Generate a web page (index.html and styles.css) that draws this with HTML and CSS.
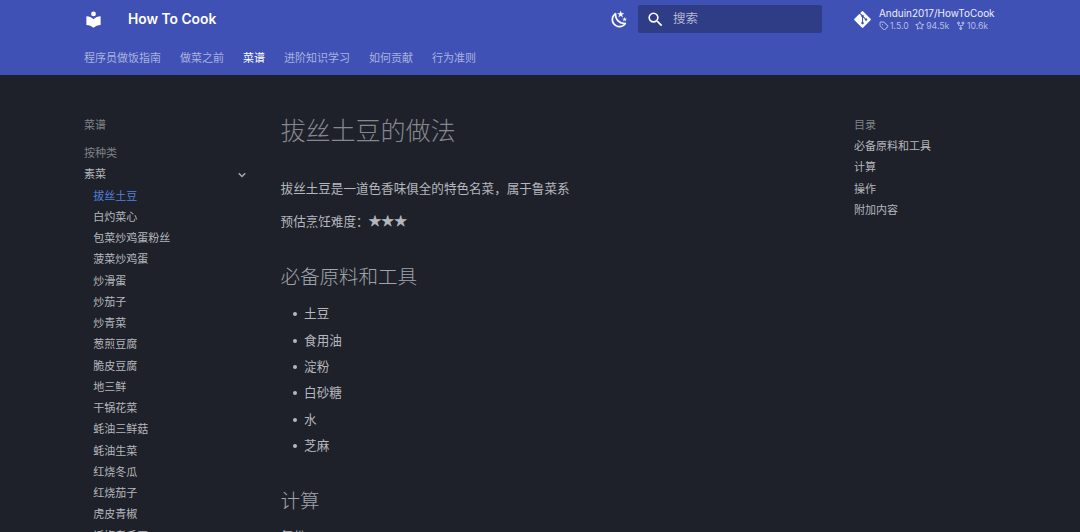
FILE: index.html
```html
<!DOCTYPE html>
<html lang="zh-CN">
<head>
<meta charset="utf-8">
<title>拔丝土豆的做法 - How To Cook</title>
<link rel="stylesheet" href="styles.css">
</head>
<body>
<header class="header">
  <div class="bar">
    <svg class="logo" viewBox="0 0 24 24"><path d="M12 8a3 3 0 0 0 3-3 3 3 0 0 0-3-3 3 3 0 0 0-3 3 3 3 0 0 0 3 3m0 3.54C9.64 9.35 6.5 8 3 8v11c3.5 0 6.64 1.35 9 3.54 2.36-2.19 5.5-3.54 9-3.54V8c-3.5 0-6.64 1.35-9 3.54Z"/></svg>
    <div class="title">How To Cook</div>
    <svg class="palette" viewBox="0 0 24 24"><path d="m17.75 4.09-2.53 1.94.91 3.06-2.63-1.81-2.63 1.81.91-3.06-2.53-1.94L12.44 4l1.06-3 1.06 3 3.19.09m3.5 6.91-1.64 1.25.59 1.98-1.7-1.17-1.7 1.17.59-1.98L15.75 11l2.06-.05L18.5 9l.69 1.95 2.06.05m-2.28 4.95c.83-.08 1.72 1.1 1.19 1.85-.32.45-.66.87-1.08 1.27C15.17 23 8.84 23 4.94 19.07c-3.91-3.9-3.91-10.24 0-14.14.4-.4.82-.76 1.27-1.08.75-.53 1.93.36 1.85 1.19-.27 2.86.69 5.83 2.89 8.02a9.96 9.96 0 0 0 8.02 2.89m-1.64 2.02a12.08 12.08 0 0 1-7.8-3.47c-2.17-2.19-3.33-5-3.49-7.82-2.81 3.14-2.7 7.96.31 10.98 3.02 3.01 7.84 3.12 10.98.31Z"/></svg>
    <div class="search">
      <svg viewBox="0 0 24 24"><path d="M9.5 3A6.5 6.5 0 0 1 16 9.5c0 1.61-.59 3.09-1.56 4.23l.27.27h.79l5 5-1.5 1.5-5-5v-.79l-.27-.27A6.516 6.516 0 0 1 9.5 16 6.5 6.5 0 0 1 3 9.5 6.5 6.5 0 0 1 9.5 3m0 2C7 5 5 7 5 9.5S7 14 9.5 14 14 12 14 9.5 12 5 9.5 5Z"/></svg>
      <span>搜索</span>
    </div>
    <div class="source">
      <svg class="git" viewBox="0 0 448 512"><path d="M439.55 236.05 244 40.45a28.87 28.87 0 0 0-40.81 0l-40.66 40.63 51.52 51.52c27.06-9.14 52.68 16.77 43.39 43.68l49.66 49.66c34.23-11.8 61.18 31 35.47 56.69-26.49 26.49-70.21-2.87-56-37.34L240.22 199v121.85c25.3 12.54 22.26 41.85 9.08 55a34.34 34.34 0 0 1-48.55 0c-17.57-17.6-11.07-46.91 11.25-56v-123c-20.8-8.51-24.6-30.74-18.64-45L142.57 101 8.45 235.14a28.86 28.86 0 0 0 0 40.81l195.61 195.6a28.86 28.86 0 0 0 40.8 0l194.69-194.69a28.86 28.86 0 0 0 0-40.81z"/></svg>
      <div class="repo">
        <div class="repo-name">Anduin2017/HowToCook</div>
        <ul class="facts">
          <li><svg viewBox="0 0 16 16"><path d="M1 7.775V2.75C1 1.784 1.784 1 2.75 1h5.025c.464 0 .91.184 1.238.513l6.25 6.25a1.75 1.75 0 0 1 0 2.474l-5.026 5.026a1.75 1.75 0 0 1-2.474 0l-6.25-6.25A1.752 1.752 0 0 1 1 7.775Zm1.5 0c0 .066.026.13.073.177l6.25 6.25a.25.25 0 0 0 .354 0l5.025-5.025a.25.25 0 0 0 0-.354l-6.25-6.25a.25.25 0 0 0-.177-.073H2.75a.25.25 0 0 0-.25.25ZM6 5a1 1 0 1 1 0 2 1 1 0 0 1 0-2Z"/></svg>1.5.0</li>
          <li><svg viewBox="0 0 16 16"><path d="M8 .25a.75.75 0 0 1 .673.418l1.882 3.815 4.21.612a.75.75 0 0 1 .416 1.279l-3.046 2.97.719 4.192a.751.751 0 0 1-1.088.791L8 12.347l-3.766 1.98a.75.75 0 0 1-1.088-.79l.72-4.194L.818 6.374a.75.75 0 0 1 .416-1.28l4.21-.611L7.327.668A.75.75 0 0 1 8 .25Zm0 2.445L6.615 5.5a.75.75 0 0 1-.564.41l-3.097.45 2.24 2.184a.75.75 0 0 1 .216.664l-.528 3.084 2.769-1.456a.75.75 0 0 1 .698 0l2.77 1.456-.53-3.084a.75.75 0 0 1 .216-.664l2.24-2.183-3.096-.45a.75.75 0 0 1-.564-.41Z"/></svg>94.5k</li>
          <li><svg viewBox="0 0 16 16"><path d="M5 5.372v.878c0 .414.336.75.75.75h4.5a.75.75 0 0 0 .75-.75v-.878a2.25 2.25 0 1 1 1.5 0v.878a2.25 2.25 0 0 1-2.25 2.25h-1.5v2.128a2.251 2.251 0 1 1-1.5 0V8.5h-1.5A2.25 2.25 0 0 1 3.5 6.25v-.878a2.25 2.25 0 1 1 1.5 0ZM5 3.25a.75.75 0 1 0-1.5 0 .75.75 0 0 0 1.5 0Zm6.75.75a.75.75 0 1 0 0-1.5.75.75 0 0 0 0 1.5Zm-3 8.75a.75.75 0 1 0-1.5 0 .75.75 0 0 0 1.5 0Z"/></svg>10.6k</li>
        </ul>
      </div>
    </div>
  </div>
  <nav class="tabs">
    <a>程序员做饭指南</a><a>做菜之前</a><a class="active">菜谱</a><a>进阶知识学习</a><a>如何贡献</a><a>行为准则</a>
  </nav>
</header>
<div class="main">
  <nav class="sidebar">
    <div class="muted section">菜谱</div>
    <div class="muted">按种类</div>
    <div class="group">素菜<svg viewBox="0 0 24 24"><path d="M7.41 8.58 12 13.17l4.59-4.59L18 10l-6 6-6-6 1.41-1.42Z"/></svg></div>
    <ul class="pages">
      <li class="current">拔丝土豆</li><li>白灼菜心</li><li>包菜炒鸡蛋粉丝</li><li>菠菜炒鸡蛋</li><li>炒滑蛋</li><li>炒茄子</li><li>炒青菜</li><li>葱煎豆腐</li><li>脆皮豆腐</li><li>地三鲜</li><li>干锅花菜</li><li>蚝油三鲜菇</li><li>蚝油生菜</li><li>红烧冬瓜</li><li>红烧茄子</li><li>虎皮青椒</li><li>话梅煮毛豆</li>
    </ul>
  </nav>
  <article class="content">
    <h1>拔丝土豆的做法</h1>
    <p>拔丝土豆是一道色香味俱全的特色名菜，属于鲁菜系</p>
    <p>预估烹饪难度：<span class="stars">★★★</span></p>
    <h2>必备原料和工具</h2>
    <ul class="items"><li>土豆</li><li>食用油</li><li>淀粉</li><li>白砂糖</li><li>水</li><li>芝麻</li></ul>
    <h2>计算</h2>
    <p>每份：</p>
  </article>
  <nav class="toc">
    <div class="muted">目录</div>
    <div>必备原料和工具</div><div>计算</div><div>操作</div><div>附加内容</div>
  </nav>
</div>
</body>
</html>
```
FILE: styles.css
```css
* { box-sizing: border-box; }
html, body { height: 100%; }
body {
  margin: 0;
  overflow: hidden;
  background: #1e2129;
  color: #b5b7be;
  font-family: Inter, "Noto Sans CJK SC", sans-serif;
  font-size: 11px;
}
ul { list-style: none; margin: 0; padding: 0; }
svg { fill: currentColor; flex: none; display: block; }

.header { height: 75px; background: #4051b5; color: #fff; }
.bar { display: flex; align-items: center; height: 38px; padding: 0 80px 0 84px; }
.logo { width: 19px; height: 19px; }
.title { margin-left: 25px; font-size: 13.8px; font-weight: 600; flex: 1; }
.palette { width: 19px; height: 19px; margin-right: 9px; stroke: currentColor; stroke-width: .2; }
.search {
  display: flex; align-items: center; gap: 8px;
  width: 184px; height: 28px; padding-left: 8px;
  background: #2f3c86; border-radius: 2px;
}
.search svg { width: 19px; height: 19px; }
.search span { font-size: 12.5px; line-height: 18px; color: #b3b7d3; }
.source { display: flex; align-items: center; width: 146px; margin-left: 32px; }
.git { width: 17px; height: 19px; }
.repo { margin-left: 8px; white-space: nowrap; }
.repo-name { font-size: 9.95px; line-height: 13px; color: #eceef8; }
.facts { display: flex; gap: 6.5px; font-size: 8.7px; line-height: 12px; color: #b4bbe2; }
.facts li { display: flex; align-items: center; gap: 1.5px; }
.facts svg { width: 9.5px; height: 9.5px; }
.tabs { display: flex; gap: 19px; padding: 12px 84px 0; line-height: 17px; color: #aab2de; }
.tabs .active { color: #fff; }

.main { display: flex; height: 457px; overflow: hidden; padding-left: 84px; line-height: 21.25px; }
.sidebar { flex: none; width: 163px; padding-top: 39.8px; }
.muted { color: #808289; }
.section { margin-bottom: 7px; }
.group { display: flex; justify-content: space-between; align-items: center; }
.group svg { width: 14px; height: 14px; margin-right: -2px; stroke: currentColor; stroke-width: .6; }
.pages { padding-left: 9.3px; }
.current { color: #4f80dc; }

.content { flex: none; width: 607px; padding: 0 0 0 33.6px; font-size: 12.57px; line-height: 20px; }
h1 { margin: 40px 0 31px; font-size: 25.1px; line-height: 33px; font-weight: 200; color: #868890; letter-spacing: -.1px; }
p { margin: 0 0 12.8px; }
h2 { margin: 32px 0 12.8px; font-size: 19.6px; line-height: 27.5px; font-weight: 200; color: #a2a4ab; letter-spacing: -.1px; }
.stars { font-family: "DejaVu Sans", sans-serif; font-size: 14.3px; line-height: 1; -webkit-text-stroke: .6px currentColor; }
.items { padding-left: 23.5px; }
.items li { display: flex; align-items: center; margin-bottom: 6.45px; }
.items li::before { content: ""; width: 4px; height: 4px; margin: 0 7.2px 0 -11.2px; border-radius: 50%; background: currentColor; }
.items + h2 { margin-bottom: 11px; }
.toc { padding-top: 39.8px; }
```
